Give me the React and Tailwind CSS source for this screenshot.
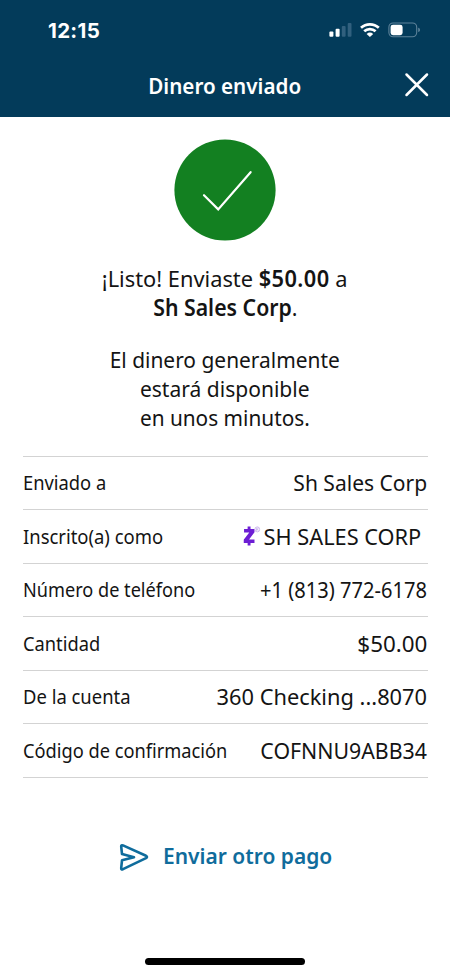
import React from "react";

function StatusIcons() {
  return (
    <svg width="92" height="18" viewBox="0 0 92 18" fill="none" aria-hidden="true">
      <rect x="0.4" y="9.5" width="4" height="5.3" rx="1" fill="#fff" />
      <rect x="6.6" y="6.8" width="4" height="8" rx="1" fill="#fff" />
      <rect x="12.8" y="4" width="3.8" height="10.8" rx="1" fill="#31607e" />
      <rect x="18.7" y="1" width="3.8" height="13.8" rx="1" fill="#31607e" />
      <g stroke="#fff" strokeWidth="2.7">
        <path d="M32 5.8a13 13 0 0 1 17.8 0" />
        <path d="M35.2 9.3a8.4 8.4 0 0 1 11.4 0" />
      </g>
      <path d="M37.6 11.9a5 5 0 0 1 6.6 0L40.9 15z" fill="#fff" />
      <rect x="59.9" y="1" width="27.8" height="13.8" rx="4.2" stroke="#5d8299" strokeWidth="1.1" />
      <rect x="61.6" y="2.7" width="12" height="10.5" rx="2.4" fill="#fff" />
      <path d="M89.2 5.7c1.2.4 1.8 1.2 1.8 2.2s-.6 1.8-1.8 2.2z" fill="#5d8299" />
    </svg>
  );
}

function ZelleMark() {
  return (
    <svg className="mr-[3px]" width="18" height="21" viewBox="0 0 18 21" fill="none" aria-hidden="true">
      <path d="M6 0.6v4M6 15.5v4" stroke="#6d1ed4" strokeWidth="3" />
      <path d="M0.8 3.1H11.6V6.2L6 13.6H11.6V17H0.4V13.8L6.2 6.4H0.8Z" fill="#6d1ed4" />
      <circle cx="14.5" cy="3.4" r="2.5" stroke="#b99be6" strokeWidth="0.7" />
      <path d="M13.7 4.8V2.2h1q.8 0 .8.7t-.8.7h-1m1 0 .8 1.2" stroke="#b99be6" strokeWidth="0.6" />
    </svg>
  );
}

const rows = [
  { label: "Enviado a", value: "Sh Sales Corp", l: "scale-x-[0.94]", v: "scale-x-[0.935]" },
  { label: "Inscrito(a) como", value: "SH SALES CORP", l: "scale-x-[0.945]", v: "scale-x-[0.967]", zelle: true },
  { label: "Número de teléfono", value: "+1 (813) 772-6178", l: "scale-x-[0.93]", v: "scale-x-[0.893]" },
  { label: "Cantidad", value: "$50.00", l: "scale-x-[0.937]", v: "scale-x-[0.995]" },
  { label: "De la cuenta", value: "360 Checking ...8070", l: "scale-x-[0.945]", v: "scale-x-[0.97]" },
  { label: "Código de confirmación", value: "COFNNU9ABB34", l: "scale-x-[0.935]", v: "scale-x-[0.947]" },
];

export default function App() {
  return (
    <div className="flex h-[976px] w-[450px] flex-col overflow-hidden bg-white font-['Noto_Sans',sans-serif] text-[#141414]">
      <header className="h-[117px] shrink-0 bg-[#033b5a] text-white">
        <div className="flex h-[58px] items-center justify-between pr-[29px] pl-12 pt-[4px]">
          <span className="font-['Inter',sans-serif] text-[20.5px] font-bold tracking-[0.3px]">12:15</span>
          <StatusIcons />
        </div>
        <div className="grid h-[58px] grid-cols-[1fr_auto_1fr] items-center pr-[20px] pl-[20px]">
          <span />
          <h1 className="scale-x-[0.96] pb-px text-[21.5px] font-semibold whitespace-nowrap">Dinero enviado</h1>
          <button className="justify-self-end pb-[4px]" aria-label="Cerrar">
            <svg width="26" height="26" viewBox="0 0 26 26" fill="none" stroke="#fff" strokeWidth="2.5" strokeLinecap="round">
              <path d="M2.5 2.5l20.5 20.5M23 2.5L2.5 23" />
            </svg>
          </button>
        </div>
      </header>

      <main className="flex flex-col items-center px-[22.5px] pt-[22px]">
        <svg width="102" height="102" viewBox="0 0 102 102" fill="none">
          <circle cx="51" cy="51" r="50.6" fill="#138021" />
          <path d="M30 56.2l14.2 14.2L76.6 33.2" stroke="#fff" strokeWidth="2.2" strokeLinecap="round" />
        </svg>
        <div className="mt-[23px] flex flex-col items-center text-[22.5px] leading-[29.3px] whitespace-nowrap">
          <p className="scale-x-[0.97]">¡Listo! Enviaste <b className="font-semibold tracking-[0.4px]">$50.00</b> a</p>
          <p className="scale-x-[0.945]"><b className="font-semibold">Sh Sales Corp</b>.</p>
        </div>
        <div className="mt-[22px] flex flex-col items-center text-[22.5px] leading-[29.3px] whitespace-nowrap">
          <p className="scale-x-[0.93]">El dinero generalmente</p>
          <p className="scale-x-[0.935]">estará disponible</p>
          <p className="scale-x-[0.925]">en unos minutos.</p>
        </div>
        <dl className="mt-[23.5px] w-full border-t-[1.5px] border-[#d3d3d3]">
          {rows.map((r) => (
            <div key={r.label} className="flex h-[53.5px] items-center justify-between border-b-[1.5px] border-[#d3d3d3] whitespace-nowrap">
              <dt className={`origin-left pb-px text-[19.5px] ${r.l}`}>{r.label}</dt>
              <dd className={`flex origin-right items-center text-[22.5px] ${r.v} ${r.zelle ? "pr-[6px]" : "pr-[0.5px]"}`}>
                {r.zelle && <ZelleMark />}
                {r.value}
              </dd>
            </div>
          ))}
        </dl>
        <button className="mt-[61px] ml-[10px] flex items-center text-[#0f6c9c]">
          <svg className="mt-[4px] -ml-px" width="30" height="30" viewBox="0 0 30 30" fill="none" stroke="currentColor" strokeWidth="2.6" strokeLinejoin="round" strokeLinecap="round">
            <path d="M2.2 3.5Q2 1.7 4 2.4L27 12.8Q29 14 27 15.2L4 26.2Q2 27 2.2 25.2L3 17.3L15 14.3L3 11Z" />
          </svg>
          <span className="ml-[14px] origin-left scale-x-[0.953] text-[22px] font-semibold whitespace-nowrap">Enviar otro pago</span>
        </button>
      </main>

      <div className="mt-auto mb-[11px] h-[7px] w-[160px] self-center rounded-full bg-black" />
    </div>
  );
}
